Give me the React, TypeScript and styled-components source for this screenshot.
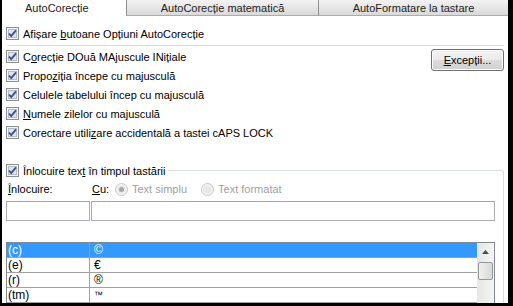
import React from 'react';
import styled, { createGlobalStyle } from 'styled-components';

const GlobalStyle = createGlobalStyle`
  html, body { margin: 0; padding: 0; background: #000; }
  body { font-family: "Liberation Sans", Tahoma, Arial, sans-serif; font-size: 11px; color: #000; }
`;

const Frame = styled.div`
  width: 513px;
  height: 306px;
  background: #000;
  padding: 0 5px 3px 2px;
  box-sizing: border-box;
  overflow: hidden;
`;

const Panel = styled.div`
  height: 100%;
  background: #fff;
  display: flex;
  flex-direction: column;
  overflow: hidden;
`;

const TabBar = styled.div`
  display: flex;
  height: 16px;
  flex-shrink: 0;
`;

const Tab = styled.div<{ $active?: boolean; $width: number; $pad?: number }>`
  width: ${p => p.$width}px;
  box-sizing: border-box;
  display: flex;
  align-items: center;
  justify-content: ${p => (p.$pad ? 'flex-start' : 'center')};
  padding-left: ${p => p.$pad ?? 0}px;
  background: ${p => (p.$active ? '#fff' : 'linear-gradient(#f3f3f3, #e6e6e6 50%, #d9d9d9)')};
  border-left: ${p => (p.$active ? 'none' : '1px solid #8d8f92')};
  border-bottom: ${p => (p.$active ? 'none' : '1px solid #a9acb1')};
  color: #222;
`;

const Content = styled.div`
  flex: 1;
  display: flex;
  flex-direction: column;
  padding: 8px 4px 0 4px;
`;

const Row = styled.label<{ $h?: number }>`
  display: flex;
  align-items: center;
  gap: 4px;
  height: ${p => p.$h ?? 19}px;
  white-space: nowrap;
`;

const Separator = styled.div`
  height: 1px;
  background: #dcdcdc;
  margin: 2px 0 1px 1px;
`;

const OptionsArea = styled.div`
  display: flex;
  justify-content: space-between;
  align-items: flex-start;
`;

const OptionList = styled.div`
  display: flex;
  flex-direction: column;
`;

const Button = styled.div`
  width: 73px;
  height: 22px;
  margin-top: 2px;
  box-sizing: border-box;
  border: 1px solid #707070;
  border-radius: 3px;
  background: linear-gradient(#f2f2f2, #ebebeb 50%, #dddddd 50%, #cfcfcf);
  box-shadow: inset 0 0 0 1px #fcfcfc;
  display: flex;
  align-items: center;
  justify-content: center;
`;

const Group = styled.div`
  margin-top: 19px;
  flex: 1;
  display: flex;
  flex-direction: column;
`;

const GroupHead = styled.div`
  display: flex;
  height: 19px;
`;

const GroupLine = styled.div`
  flex: 1;
  margin: 9px 0 0 3px;
  border-top: 1px solid #d5dfe5;
  border-right: 1px solid #d5dfe5;
  border-top-right-radius: 3px;
`;

const GroupBody = styled.div`
  flex: 1;
  border-right: 1px solid #d5dfe5;
  padding-right: 8px;
  display: flex;
  flex-direction: column;
`;

const LabelRow = styled.div`
  display: flex;
  align-items: center;
  height: 18px;
  padding-left: 2px;
`;

const FieldLabel = styled.span<{ $w: number }>`
  width: ${p => p.$w}px;
  flex-shrink: 0;
`;

const Radio = styled.span`
  display: flex;
  align-items: center;
  gap: 4px;
  color: #a0a0a0;
  margin-right: 14px;
`;

const Inputs = styled.div`
  display: flex;
  margin-top: 3px;
  height: 20px;
`;

const Input = styled.div<{ $w?: number }>`
  ${p => (p.$w ? `width: ${p.$w}px;` : 'flex: 1;')}
  box-sizing: border-box;
  border: 1px solid #abadb3;
  border-top-color: #a6a6a6;
  background: #fff;
  & + & { margin-left: 1px; }
`;

const Table = styled.div`
  margin-top: 21px;
  display: flex;
  border: 1px solid #828790;
  border-bottom: none;
  flex: 1;
`;

const Rows = styled.div`
  flex: 1;
  display: flex;
  flex-direction: column;
`;

const ListRow = styled.div<{ $sel?: boolean }>`
  display: flex;
  height: 15px;
  flex-shrink: 0;
  box-sizing: border-box;
  border-bottom: 1px solid #a0a0a0;
  background: ${p => (p.$sel ? '#3399ff' : '#fff')};
  color: ${p => (p.$sel ? '#fff' : '#000')};
`;

const Cell = styled.div<{ $w?: number }>`
  ${p => (p.$w ? `width: ${p.$w}px; border-right: 1px solid #a0a0a0;` : 'flex: 1;')}
  box-sizing: border-box;
  padding-left: 1px;
  display: flex;
  align-items: center;
  font-size: 12px;
`;

const Symbol = styled.span<{ $size?: number }>`
  padding-left: 3px;
  font-size: ${p => p.$size ?? 12}px;
`;

const ScrollBar = styled.div`
  width: 17px;
  background: linear-gradient(90deg, #e6e6e6, #f4f4f4);
  display: flex;
  flex-direction: column;
  align-items: center;
`;

const ScrollArrow = styled.div`
  height: 17px;
  width: 17px;
  display: flex;
  align-items: center;
  justify-content: center;
`;

const Thumb = styled.div`
  width: 15px;
  height: 18px;
  margin-top: 2px;
  box-sizing: border-box;
  border: 1px solid #979797;
  border-radius: 2px;
  background: linear-gradient(90deg, #f0f0f0, #d8d8d8);
`;

const U = styled.span`
  text-decoration: underline;
`;

const Check = () => (
  <svg width="13" height="13" viewBox="0 0 13 13" style={{ flexShrink: 0 }}>
    <rect x="0.5" y="0.5" width="12" height="12" fill="#f4f4f4" stroke="#8e8f8f" />
    <rect x="2.5" y="2.5" width="8" height="8" fill="#dfe3ea" stroke="#b4bcc7" />
    <path d="M3 6.5 L5.2 9 L10 3.3" fill="none" stroke="#3c4e8a" strokeWidth="1.8" />
  </svg>
);

const RadioDot = ({ on }: { on?: boolean }) => (
  <svg width="13" height="13" viewBox="0 0 13 13">
    <circle cx="6.5" cy="6.5" r="6" fill="#f4f4f4" stroke="#c6c6c6" />
    <circle cx="6.5" cy="6.5" r="4" fill="#e8e8e8" />
    {on && <circle cx="6.5" cy="6.5" r="2.5" fill="#a8a8a8" />}
  </svg>
);

const options: React.ReactNode[] = [
  <>C<U>o</U>recție DOuă MAjuscule INițiale</>,
  <>Propo<U>z</U>iția începe cu majusculă</>,
  <>Celulele tabelului încep cu ma<U>j</U>usculă</>,
  <><U>N</U>umele zilelor cu majusculă</>,
  <>Corectare utili<U>z</U>are accidentală a tastei cAPS LOCK</>,
];

const entries = [
  { key: '(c)', value: '©', size: 12 },
  { key: '(e)', value: '€', size: 12 },
  { key: '(r)', value: '®', size: 12 },
  { key: '(tm)', value: '™', size: 9 },
];

export default function App() {
  return (
    <>
      <GlobalStyle />
      <Frame>
        <Panel>
          <TabBar>
            <Tab $active $width={124} $pad={23}>AutoCorecție</Tab>
            <Tab $width={192}>AutoCorecție matematică</Tab>
            <Tab $width={190}>AutoFormatare la tastare</Tab>
          </TabBar>
          <Content>
            <Row>
              <Check />
              <span>Afișare <U>b</U>utoane Opțiuni AutoCorecție</span>
            </Row>
            <Separator />
            <OptionsArea>
              <OptionList>
                {options.map((o, i) => (
                  <Row key={i}>
                    <Check />
                    <span>{o}</span>
                  </Row>
                ))}
              </OptionList>
              <Button><span><U>E</U>xcepții...</span></Button>
            </OptionsArea>
            <Group>
              <GroupHead>
                <Row>
                  <Check />
                  <span>Înlocuire tex<U>t</U> în timpul tastării</span>
                </Row>
                <GroupLine />
              </GroupHead>
              <GroupBody>
                <LabelRow>
                  <FieldLabel $w={84}><U>Î</U>nlocuire:</FieldLabel>
                  <FieldLabel $w={23}><U>C</U>u:</FieldLabel>
                  <Radio><RadioDot on />Text simplu</Radio>
                  <Radio><RadioDot />Text formatat</Radio>
                </LabelRow>
                <Inputs>
                  <Input $w={84} />
                  <Input />
                </Inputs>
                <Table>
                  <Rows>
                    {entries.map((e, i) => (
                      <ListRow key={e.key} $sel={i === 0}>
                        <Cell $w={83}>{e.key}</Cell>
                        <Cell><Symbol $size={e.size}>{e.value}</Symbol></Cell>
                      </ListRow>
                    ))}
                  </Rows>
                  <ScrollBar>
                    <ScrollArrow>
                      <svg width="7" height="4" viewBox="0 0 7 4">
                        <path d="M0 4 L3.5 0 L7 4 Z" fill="#4d4d4d" />
                      </svg>
                    </ScrollArrow>
                    <Thumb />
                  </ScrollBar>
                </Table>
              </GroupBody>
            </Group>
          </Content>
        </Panel>
      </Frame>
    </>
  );
}
